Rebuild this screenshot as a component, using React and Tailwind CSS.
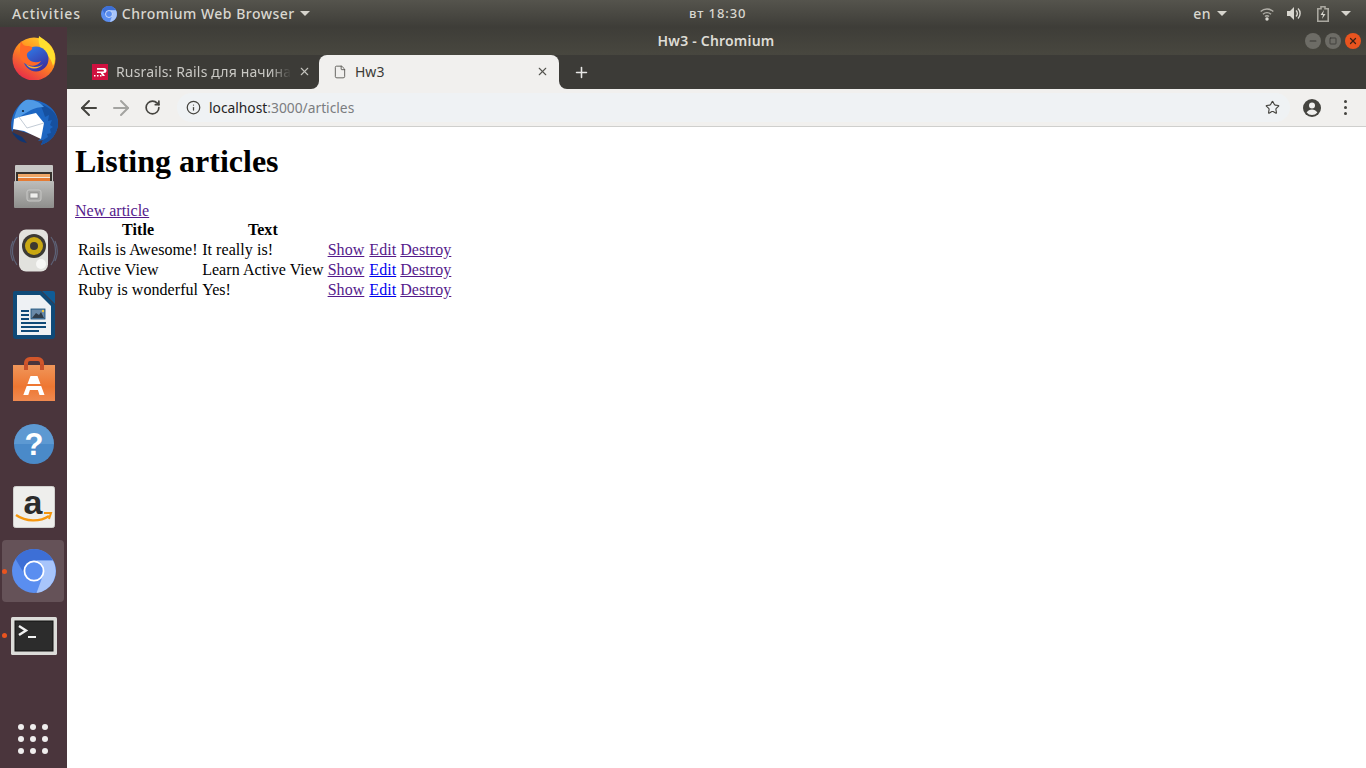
import { ArrowLeft, ArrowRight, RotateCw, Info, Star, X, Plus, Minus, Square, File } from 'lucide-react';

const ubuntu = "font-['Noto_Sans',sans-serif]";

function Caret({ className }) {
    return (
        <svg width="10" height="5" viewBox="0 0 10 5" className={className}>
            <path d="M0 0h10L5 5z" fill="#d6d4cd" />
        </svg>
    );
}

function ChromiumIcon({ size = 44 }) {
    return (
        <svg width={size} height={size} viewBox="0 0 44 44">
            <circle cx="22" cy="22" r="22" fill="#5a8ef0" />
            <path d="M22 0A22 22 0 0 1 41 11.5H22A10 10 0 0 0 13 26L3.5 10A22 22 0 0 1 22 0z" fill="#3d6fd6" />
            <path d="M41 11.5A22 22 0 0 1 24.5 44L31.5 25A10 10 0 0 0 22 11.5z" fill="#a8c5fb" />
            <circle cx="22" cy="22" r="9.6" fill="#5a8ef0" stroke="#fff" strokeWidth="1.8" />
        </svg>
    );
}

function Firefox() {
    return (
        <svg width="44" height="46" viewBox="0 0 44 46">
            <defs>
                <linearGradient id="ffo" x1="0.8" y1="0" x2="0.2" y2="1">
                    <stop offset="0" stopColor="#ffd02e" />
                    <stop offset="0.45" stopColor="#ff8a1e" />
                    <stop offset="1" stopColor="#e5244e" />
                </linearGradient>
                <linearGradient id="ffb" x1="0.2" y1="0" x2="0.8" y2="1">
                    <stop offset="0" stopColor="#2f7be8" />
                    <stop offset="1" stopColor="#3b2a9a" />
                </linearGradient>
            </defs>
            <circle cx="22" cy="25" r="21.5" fill="url(#ffo)" />
            <path d="M27 2c6 4 16 11 16 22 0 3-1 6-2 8-2-9-8-13-12-17-2-4-3-9-2-13z" fill="#ffdf2e" />
            <circle cx="24" cy="25" r="12.5" fill="url(#ffb)" />
            <path d="M9 7c1 3 3 5 6 5 4 0 6 1 5 3-1 2-6 3-5 7 1 5 8 8 14 5-2 4-8 6-13 4-6-2-9-8-8-13 0-4 0-8 1-11z" fill="#ff6a26" />
            <path d="M14 30c5 4 13 4 17 0-3 5-13 7-17 0z" fill="#ffb52b" />
        </svg>
    );
}

function Thunderbird() {
    return (
        <svg width="48" height="46" viewBox="0 0 48 46">
            <path d="M16 1C30-1 48 8 48 24c0 10-7 19-17 22l2-5-5 1 3-3-7-3L4 30l-2 3C-1 24 3 8 16 1z" fill="#1d66c2" />
            <path d="M30 5c10 3 18 10 18 19 0 10-7 19-17 22l2-5 5-3-1-3 4-1-1-4 3-2-3-2 2-5-4 1 1-6-4 2-2-6z" fill="#16509f" />
            <path d="M2 33c3 6 8 10 15 11l-5-6z" fill="#0f3673" />
            <path d="M4 20C6 11 10 4 16 1c7-1 14 2 18 7-5 0-9 1-13 3L9 18z" fill="#4f9ae6" />
            <path d="M9 18l17-4 8 10-3 16-17-8-11-2 1-10z" fill="#fff" />
            <path d="M9 18l8 11 17-5" fill="none" stroke="#c3ccd6" strokeWidth="1" />
            <circle cx="13" cy="12" r="1.1" fill="#10253f" />
        </svg>
    );
}

function Files() {
    return (
        <svg width="42" height="44" viewBox="0 0 42 44">
            <defs>
                <linearGradient id="fg" x1="0" y1="0" x2="0" y2="1">
                    <stop offset="0" stopColor="#bdbdbb" />
                    <stop offset="1" stopColor="#8e8e8c" />
                </linearGradient>
            </defs>
            <path d="M2 1a1 1 0 0 1 1-1h36a1 1 0 0 1 1 1v41H2z" fill="#c7c7c5" />
            <rect x="3" y="7" width="36" height="11" fill="#37322d" />
            <rect x="5" y="9" width="32" height="3" fill="#f0a766" />
            <rect x="5" y="12" width="32" height="1" fill="#f2ece0" />
            <rect x="5" y="13" width="32" height="4" fill="#e57b33" />
            <rect x="1" y="16" width="40" height="27" rx="1" fill="url(#fg)" />
            <rect x="14" y="25" width="14" height="11" rx="2" fill="#a6a6a4" stroke="#c8c8c6" />
            <rect x="17" y="28" width="8" height="5" fill="#eeeeec" stroke="#777" strokeWidth="0.6" />
        </svg>
    );
}

function Rhythmbox() {
    return (
        <svg width="48" height="44" viewBox="0 0 48 44">
            <path d="M7 8a24 24 0 0 0 0 28M41 8a24 24 0 0 1 0 28M3 12a24 24 0 0 0 0 20M45 12a24 24 0 0 1 0 20" fill="none" stroke="#5d6277" strokeWidth="1.2" />
            <rect x="9" y="0.5" width="29" height="42" rx="7" fill="#e2e2de" />
            <circle cx="24" cy="17" r="12" fill="#3c3a35" />
            <circle cx="24" cy="17" r="9" fill="#c9a812" />
            <circle cx="24" cy="17" r="4" fill="#3b3830" />
            <circle cx="31" cy="35" r="5" fill="#f7f7f5" />
        </svg>
    );
}

function Writer() {
    return (
        <svg width="42" height="48" viewBox="0 0 42 48">
            <path d="M2 0h26l14 14v31a3 3 0 0 1-3 3H3a3 3 0 0 1-3-3V2a2 2 0 0 1 2-2z" fill="#0f4a78" />
            <path d="M29 0h11a2 2 0 0 1 2 2v11z" fill="#0f5c96" />
            <path d="M4 4h23l11 11v29H4z" fill="#eef1f4" />
            <path d="M8 19h8v2H8zM8 23h8v2H8zM8 27h8v2H8zM8 31h25v2H8zM8 35h25v2H8zM8 39h18v2H8z" fill="#0f4a78" />
            <rect x="18" y="18" width="14" height="10" fill="#6a8aa8" stroke="#0f4a78" strokeWidth="0.8" />
            <path d="M19 27l4-5 3 2 2-3 3 6z" fill="#2f3d4a" />
            <circle cx="30" cy="20" r="1.2" fill="#f0c63c" />
        </svg>
    );
}

function Software() {
    return (
        <svg width="42" height="44" viewBox="0 0 42 44">
            <defs>
                <linearGradient id="sg" x1="0" y1="0" x2="0" y2="1">
                    <stop offset="0" stopColor="#f0965a" />
                    <stop offset="0.6" stopColor="#ee7732" />
                    <stop offset="1" stopColor="#f08a50" />
                </linearGradient>
            </defs>
            <path d="M13 14V6a4 4 0 0 1 4-4h8a4 4 0 0 1 4 4v8" fill="none" stroke="#d2562a" strokeWidth="4" />
            <path d="M0 8h42v36H0z" fill="url(#sg)" />
            <path d="M13 13V7M29 13V7" stroke="#c9502a" strokeWidth="4" />
            <path d="M17.5 19h7l7 19h-5l-1.6-5h-8l-1.6 5h-5z" fill="#fff" />
            <rect x="12" y="27" width="18" height="2" fill="#ee7732" />
        </svg>
    );
}

function Help() {
    return (
        <svg width="40" height="40" viewBox="0 0 40 40">
            <circle cx="20" cy="20" r="20" fill="#4a8ac9" />
            <path d="M20 0a20 20 0 0 1 20 20H0A20 20 0 0 1 20 0z" fill="#6fa8dc" opacity="0.5" />
            <text x="20" y="31" textAnchor="middle" fontFamily="Liberation Sans, sans-serif" fontWeight="700" fontSize="31" fill="#fff">?</text>
        </svg>
    );
}

function Amazon() {
    return (
        <svg width="42" height="42" viewBox="0 0 42 42" className="overflow-visible">
            <rect x="0.5" y="0.5" width="41" height="41" rx="2" fill="#eeeeec" stroke="#d0d0ce" />
            <text x="20" y="28" textAnchor="middle" fontFamily="Liberation Sans, sans-serif" fontWeight="700" fontSize="34" fill="#2b2b2b">a</text>
            <path d="M3 29c10 7 24 7 33 1" fill="none" stroke="#f5960d" strokeWidth="2.4" />
            <path d="M31 27l7 0-2 6" fill="none" stroke="#f5960d" strokeWidth="2" />
        </svg>
    );
}

function Terminal() {
    return (
        <svg width="46" height="38" viewBox="0 0 46 38">
            <rect x="0" y="0" width="46" height="38" rx="1.5" fill="#dcdcd9" />
            <rect x="4" y="4" width="38" height="30" fill="#2c2c2c" stroke="#111" />
            <path d="M8 9l7 4.5-7 4.5" fill="none" stroke="#f2f2f2" strokeWidth="2.4" />
            <rect x="17" y="19" width="8" height="2" fill="#f2f2f2" />
        </svg>
    );
}

function Dock() {
    const items = [
        { icon: <Firefox />, key: 'firefox', nudge: 'mb-[2px]' },
        { icon: <Thunderbird />, key: 'thunderbird' },
        { icon: <Files />, key: 'files', nudge: 'mt-[2px]' },
        { icon: <Rhythmbox />, key: 'rhythmbox' },
        { icon: <Writer />, key: 'writer' },
        { icon: <Software />, key: 'software' },
        { icon: <Help />, key: 'help', nudge: 'mt-[2px]' },
        { icon: <Amazon />, key: 'amazon' },
        { icon: <ChromiumIcon />, key: 'chromium', running: true, active: true, nudge: 'mb-[2px]' },
        { icon: <Terminal />, key: 'terminal', running: true },
    ];

    return (
        <aside className="flex w-[67px] shrink-0 flex-col overflow-hidden bg-[#4a353c]">
            <div className="-mt-[1px] flex flex-col">
                {items.map((item) => (
                    <div key={item.key} className="relative flex h-[64.2px] items-center justify-center">
                        {item.active && (
                            <span className="absolute left-[2px] top-0 h-[62px] w-[62px] rounded-[4px] bg-[#655258]" />
                        )}
                        {item.running && (
                            <span className="absolute left-[2px] top-[29px] h-[5px] w-[5px] rounded-full bg-[#e9541f]" />
                        )}
                        <span className={`relative flex ${item.nudge ?? ''}`}>{item.icon}</span>
                    </div>
                ))}
            </div>
            <div className="mt-auto mb-[14px] ml-[18px] grid w-[30px] grid-cols-3 gap-[6px]">
                {[...Array(9)].map((_, i) => (
                    <span key={i} className="h-[6px] w-[6px] rounded-full bg-[#efeded]" />
                ))}
            </div>
        </aside>
    );
}

function TopBar() {
    return (
        <header className={`relative flex h-[27px] items-center bg-gradient-to-b from-[#55544d] to-[#3e3d38] text-[14px] font-medium tracking-[0.45px] text-[#d9d7d0] ${ubuntu}`}>
            <span className="ml-[12px] tracking-[0.85px]">Activities</span>
            <span className="ml-[20px] flex"><ChromiumIcon size={16} /></span>
            <span className="ml-[5px] tracking-[0.5px]">Chromium Web Browser</span>
            <Caret className="ml-[5px]" />
            <span className="absolute left-[689px] text-[13px] tracking-[0.9px]">вт 18:30</span>
            <span className="ml-auto">en</span>
            <Caret className="ml-[6px]" />
            <svg width="14" height="14" viewBox="0 0 14 14" className="ml-[33px]">
                <path d="M0.7 4.6a9 9 0 0 1 12.6 0M3 7.2a5.8 5.8 0 0 1 8 0M5 9.6a2.8 2.8 0 0 1 4 0" fill="none" stroke="#b0aea7" strokeWidth="1.4" />
                <circle cx="7" cy="12" r="1.7" fill="#d9d7d0" />
            </svg>
            <svg width="15" height="15" viewBox="0 0 15 15" className="ml-[13px]">
                <path d="M0 5h3l4-4v13l-4-4H0z" fill="#d9d7d0" />
                <path d="M9 4.5a4 4 0 0 1 0 6M11 2.5a7 7 0 0 1 0 10" fill="none" stroke="#d9d7d0" strokeWidth="1.4" />
            </svg>
            <svg width="12" height="16" viewBox="0 0 12 16" className="ml-[15px]">
                <path d="M4 0.8h4v2h3.2v12.4H0.8V2.8H4z" fill="none" stroke="#a9a79f" strokeWidth="1.6" />
                <path d="M7 4L3.5 9H6l-1 4 3.5-5H6z" fill="#d9d7d0" />
            </svg>
            <Caret className="ml-[12px] mr-[15px]" />
        </header>
    );
}

function WindowButton({ color, children }) {
    return (
        <span className={`flex h-4 w-4 items-center justify-center rounded-full ${color}`}>{children}</span>
    );
}

function TitleBar() {
    return (
        <div className={`relative flex h-[28px] items-center justify-center bg-gradient-to-b from-[#3e3d38] to-[#48473f] pb-[2px] text-[14px] font-semibold tracking-[0.2px] text-[#dedcd5] ${ubuntu}`}>
            <span className="ml-[-1px]">Hw3 - Chromium</span>
            <div className="absolute right-[5px] top-[6px] flex gap-[4px]">
                <WindowButton color="bg-[#6d6c66]"><Minus size={10} strokeWidth={2.5} className="text-[#3a3935]" /></WindowButton>
                <WindowButton color="bg-[#6d6c66]"><Square size={8} strokeWidth={2.5} className="text-[#3a3935]" /></WindowButton>
                <WindowButton color="bg-[#e9541f]"><X size={10} strokeWidth={3} className="text-[#3a2015]" /></WindowButton>
            </div>
        </div>
    );
}

function TabStrip() {
    return (
        <div className={`flex h-[34px] items-stretch bg-[#3c3b37] text-[14px] ${ubuntu}`}>
            <div className="relative flex w-[252px] items-center pb-px pl-[25px] text-[#c9c8c4]">
                <svg width="16" height="16" viewBox="0 0 16 16" className="shrink-0">
                    <rect width="16" height="16" fill="#d0103f" />
                    <path d="M5 4h7a2 2 0 0 1 0 5h-1l2 3h-2.4L8.6 9H5V7.6h6a.8.8 0 0 0 0-1.8H5z" fill="#fff" />
                    <path d="M2 11h1.5v1.5H2zM5 11h1.5v1.5H5zM8 11h1.5v1.5H8z" fill="#fff" />
                </svg>
                <span className="ml-[8px] whitespace-nowrap tracking-[0.15px] [mask-image:linear-gradient(to_right,black_88%,transparent)]">Rusrails: Rails для начина</span>
                <X size={13} strokeWidth={2} className="absolute right-[8px] text-[#c4c3be]" />
            </div>
            <div className="relative flex w-[240px] items-center rounded-t-[8px] bg-[#f1f0ee] pb-px pl-[14px] text-[#3c3b37]">
                <span className="absolute bottom-0 -left-[8px] h-2 w-2 bg-[#f1f0ee]">
                    <span className="block h-2 w-2 rounded-br-[8px] bg-[#3c3b37]" />
                </span>
                <span className="absolute bottom-0 -right-[8px] h-2 w-2 bg-[#f1f0ee]">
                    <span className="block h-2 w-2 rounded-bl-[8px] bg-[#3c3b37]" />
                </span>
                <File size={14} strokeWidth={1.5} className="text-[#55544f]" />
                <span className="ml-[8px] mr-auto">Hw3</span>
                <X size={13} strokeWidth={2} className="mr-[10px] text-[#55544f]" />
            </div>
            <div className="flex w-[44px] items-center justify-center">
                <Plus size={17} strokeWidth={2.2} className="text-[#e8e8e6]" />
            </div>
        </div>
    );
}

function Toolbar() {
    return (
        <div className="flex h-[38px] items-center border-b border-[#cfcfcd] bg-[#f1f0ee]">
            <ArrowLeft size={24} strokeWidth={2} className="ml-[10px] text-[#45443f]" />
            <ArrowRight size={24} strokeWidth={2} className="ml-[8px] text-[#a3a3a0]" />
            <RotateCw size={17} strokeWidth={2.4} className="ml-[11px] text-[#45443f]" />
            <div className={`ml-[16px] flex h-[29px] flex-1 items-center rounded-full bg-[#eff2f4] pl-[9px] text-[13.8px] ${ubuntu}`}>
                <Info size={15} strokeWidth={2} className="text-[#45443f]" />
                <span className="ml-[8px] pt-[2px] text-[#25241f]">localhost</span>
                <span className="pt-[2px] text-[#7b7d80]">:3000/articles</span>
                <Star size={15} strokeWidth={1.8} className="ml-auto mr-[10px] text-[#45443f]" />
            </div>
            <svg width="18" height="18" viewBox="0 0 18 18" className="ml-[13px]">
                <circle cx="9" cy="9" r="9" fill="#45443f" />
                <circle cx="9" cy="6.6" r="3" fill="#f1f0ee" />
                <path d="M3.6 13.5c1.3-2 3.3-3 5.4-3s4.1 1 5.4 3a7 7 0 0 1-10.8 0z" fill="#f1f0ee" />
            </svg>
            <div className="ml-[23px] mr-[19px] flex flex-col gap-[3px]">
                {[0, 1, 2].map((i) => (
                    <span key={i} className="h-[3px] w-[3px] rounded-full bg-[#45443f]" />
                ))}
            </div>
        </div>
    );
}

const visited = 'text-[#551a8b] underline';
const unvisited = 'text-[#0000ee] underline';

const articles = [
    { title: 'Rails is Awesome!', text: 'It really is!', edit: visited },
    { title: 'Active View', text: 'Learn Active View', edit: unvisited },
    { title: 'Ruby is wonderful', text: 'Yes!', edit: unvisited },
];

function Page() {
    return (
        <main className="flex-1 bg-white p-2 font-['Liberation_Serif',serif] text-[16px] leading-[18px] text-black">
            <h1 className="mt-2 text-[32px] font-bold leading-[37px]">Listing articles</h1>
            <a href="#" className={`${visited} mt-[22px] block w-fit`}>New article</a>
            <table className="border-separate border-spacing-x-[2px] border-spacing-y-0 tracking-[0.06px]">
                <thead>
                    <tr>
                        <th className="p-px text-center font-bold">Title</th>
                        <th className="p-px text-center font-bold">Text</th>
                        <th colSpan={3} className="p-px"></th>
                    </tr>
                </thead>
                <tbody>
                    {articles.map((article) => (
                        <tr key={article.title}>
                            <td className="p-px">{article.title}</td>
                            <td className="p-px">{article.text}</td>
                            <td className="p-px pr-[2px]"><a href="#" className={visited}>Show</a></td>
                            <td className="p-px"><a href="#" className={article.edit}>Edit</a></td>
                            <td className="p-px"><a href="#" className={visited}>Destroy</a></td>
                        </tr>
                    ))}
                </tbody>
            </table>
        </main>
    );
}

export default function App() {
    return (
        <div className="flex h-[768px] w-[1366px] flex-col overflow-hidden">
            <TopBar />
            <div className="flex min-h-0 flex-1">
                <Dock />
                <div className="flex min-w-0 flex-1 flex-col">
                    <TitleBar />
                    <TabStrip />
                    <Toolbar />
                    <Page />
                </div>
            </div>
        </div>
    );
}
